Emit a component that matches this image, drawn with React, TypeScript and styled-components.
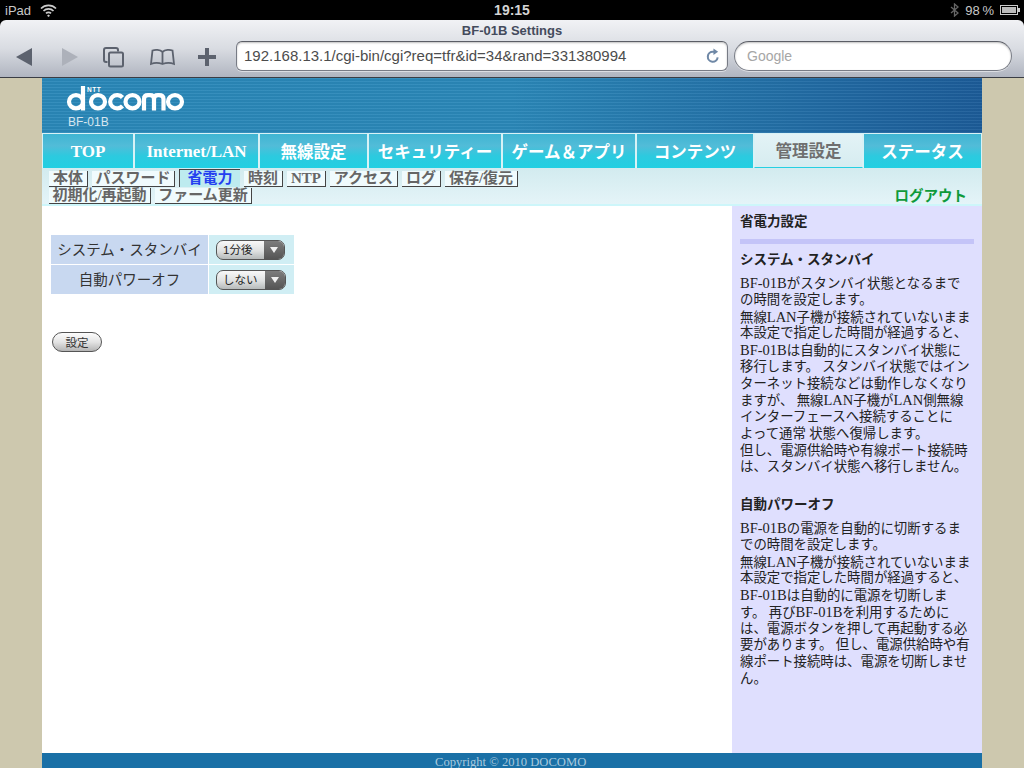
import React from "react";
import styled, { createGlobalStyle } from "styled-components";

const SANS = `"Liberation Sans", "Noto Sans CJK JP", sans-serif`;
const SERIF = `"Liberation Serif", "Noto Sans CJK JP", serif`;

const Global = createGlobalStyle`
  html, body { margin: 0; padding: 0; background: #000; }
  body { width: 1024px; height: 768px; overflow: hidden; font-family: ${SANS}; }
  * { box-sizing: border-box; }
`;

const Screen = styled.div`
  width: 1024px;
  height: 768px;
  display: flex;
  flex-direction: column;
  overflow: hidden;
  background: #000;
`;

const StatusBar = styled.div`
  height: 20px;
  display: grid;
  grid-template-columns: 1fr auto 1fr;
  align-items: center;
  padding: 0 5px;
  background: #000;
  color: #c8c8c8;
  font-size: 13px;
`;
const StatusLeft = styled.div`
  display: flex;
  align-items: center;
  gap: 9px;
`;
const StatusTime = styled.div`
  font-size: 14px;
  font-weight: 700;
  color: #d4d4d4;
`;
const StatusRight = styled.div`
  display: flex;
  align-items: center;
  justify-content: flex-end;
  gap: 6px;
`;
const Battery = styled.div`
  width: 18px;
  height: 10px;
  border: 1px solid #ccc;
  padding: 1px;
  margin-right: 1px;
  position: relative;
  &::before {
    content: "";
    display: block;
    height: 100%;
    background: #bbb;
  }
  &::after {
    content: "";
    position: absolute;
    right: -3px;
    top: 2px;
    width: 2px;
    height: 4px;
    background: #ccc;
  }
`;

const Chrome = styled.div`
  height: 58px;
  border-radius: 6px 6px 0 0;
  background: linear-gradient(#f1f2f5 0%, #d9dce2 50%, #b0b5c0 100%);
  border-bottom: 1px solid #3a3d44;
  display: flex;
  flex-direction: column;
`;
const PageTitle = styled.div`
  height: 20px;
  padding-top: 3px;
  text-align: center;
  font-size: 13px;
  font-weight: 700;
  line-height: 15px;
  color: #444b5c;
`;
const ToolRow = styled.div`
  display: flex;
  align-items: center;
  padding-left: 16px;
  height: 31px;
`;
const ToolIcon = styled.svg<{ $w: number; $mr: number }>`
  width: ${(p) => p.$w}px;
  height: 22px;
  margin-top: 3px;
  margin-right: ${(p) => p.$mr}px;
  flex: none;
`;
const UrlBar = styled.div`
  width: 492px;
  height: 30px;
  border: 1px solid #777b85;
  border-top-color: #5b5e66;
  border-radius: 6px;
  background: #fff;
  box-shadow: inset 0 1px 2px rgba(0, 0, 0, 0.25), 0 1px 0 rgba(255, 255, 255, 0.5);
  display: flex;
  align-items: center;
  justify-content: space-between;
  padding: 0 7px;
  font-size: 15px;
  color: #4c4c4c;
`;
const SearchBar = styled.div`
  width: 278px;
  height: 30px;
  margin-left: 6px;
  border: 1px solid #777b85;
  border-top-color: #5b5e66;
  border-radius: 15px;
  background: #fff;
  box-shadow: inset 0 1px 2px rgba(0, 0, 0, 0.25), 0 1px 0 rgba(255, 255, 255, 0.5);
  display: flex;
  align-items: center;
  padding-left: 12px;
  font-size: 14px;
  color: #a6a6a6;
`;

const Backdrop = styled.div`
  flex: 1;
  min-height: 0;
  background: #cdc8ae;
  padding: 0 42px;
`;
const Page = styled.div`
  height: 100%;
  display: flex;
  flex-direction: column;
  background: #fff;
`;
const Banner = styled.div`
  height: 55px;
  flex: none;
  padding: 8px 0 0 24px;
  background:
    repeating-linear-gradient(180deg, rgba(255, 255, 255, 0.055) 0 1px, rgba(0, 0, 0, 0.04) 1px 3px),
    linear-gradient(90deg, #2a88b9 0%, #2b88b9 50%, #1c5c99 100%);
`;
const LogoSvg = styled.svg`
  display: block;
  width: 122px;
  height: 30px;
`;
const Model = styled.div`
  margin: 0 0 0 2px;
  font-size: 12px;
  line-height: 12px;
  color: #d6e6f0;
`;

const TabRow = styled.div`
  height: 35px;
  flex: none;
  display: flex;
  background: #d4edf1;
`;
const Tab = styled.div<{ $w: number; $active?: boolean; $latin?: boolean }>`
  width: ${(p) => p.$w}px;
  flex: none;
  display: flex;
  align-items: center;
  justify-content: center;
  padding-top: ${(p) => (p.$latin ? 2 : 1)}px;
  border: solid #d8f2f6;
  border-width: 1px 1px 0 1px;
  font-family: ${(p) => (p.$latin ? SERIF : SANS)};
  font-weight: 700;
  font-size: ${(p) => (p.$latin ? 17 : 16.5)}px;
  line-height: 20px;
  white-space: nowrap;
  color: ${(p) => (p.$active ? "#6f6f6f" : "#fff")};
  background: ${(p) =>
    p.$active
      ? "linear-gradient(#e3f3f6, #d6ecf0)"
      : "linear-gradient(#3fb5d2 0%, #52bcd8 35%, #2ccadf 65%, #22cfe2 100%)"};
  border-bottom: ${(p) => (p.$active ? "1px solid #25d0e2" : "0")};
`;

const SubBar = styled.div`
  height: 38px;
  flex: none;
  display: flex;
  align-items: flex-start;
  justify-content: space-between;
  padding: 3px 15px 0 7px;
  background: linear-gradient(#d2ebef, #e4f4f8);
  border-bottom: 2px solid #cdf6fa;
`;
const SubLines = styled.div`
  display: flex;
  flex-direction: column;
  gap: 1px;
`;
const SubLine = styled.div`
  display: flex;
  height: 16px;
  gap: 4px;
`;
const SubItem = styled.div<{ $w: number; $active?: boolean }>`
  width: ${(p) => p.$w}px;
  height: ${(p) => (p.$active ? 18 : 16)}px;
  margin-top: ${(p) => (p.$active ? -2 : 0)}px;
  flex: none;
  display: flex;
  align-items: center;
  justify-content: center;
  padding-bottom: 2px;
  font-family: ${SERIF};
  font-weight: 700;
  font-size: 15px;
  line-height: 14px;
  white-space: nowrap;
  color: ${(p) => (p.$active ? "#2440f0" : "#666")};
  background: ${(p) => (p.$active ? "#bdebef" : "#f0fbfd")};
  border-style: solid;
  border-color: #444;
  border-width: ${(p) => (p.$active ? "1px 0 0 1px" : "0 1px 1px 0")};
`;
const Logout = styled.div`
  margin-top: 16px;
  font-size: 14.5px;
  line-height: 18px;
  font-weight: 700;
  color: #0e9a3a;
`;

const Body = styled.div`
  flex: 1;
  min-height: 0;
  display: flex;
`;
const Main = styled.div`
  flex: 1;
  padding: 29px 0 0 9px;
`;
const SettingsTable = styled.div`
  display: grid;
  grid-template-columns: 157px 85px;
  grid-auto-rows: 29px;
  gap: 1px;
  width: 243px;
`;
const LabelCell = styled.div`
  background: #c8d8f0;
  display: flex;
  align-items: center;
  justify-content: center;
  padding-bottom: 2px;
  font-size: 14.5px;
  color: #333;
`;
const ValueCell = styled.div`
  background: #d0eef4;
  display: flex;
  align-items: center;
  padding-left: 7px;
`;
const Select = styled.div<{ $w: number }>`
  width: ${(p) => p.$w}px;
  height: 20px;
  border: 1px solid #555;
  border-radius: 7px;
  overflow: hidden;
  display: flex;
  background: linear-gradient(#f8f8f8, #dfe1e1 55%, #b6baba);
  font-size: 11.5px;
  color: #222;
`;
const SelectText = styled.div`
  flex: 1;
  padding-left: 6px;
  line-height: 18px;
`;
const SelectArrow = styled.div`
  width: 20px;
  display: flex;
  align-items: center;
  justify-content: center;
  background: linear-gradient(#7d7d7d, #555);
  &::before {
    content: "";
    border: 4px solid transparent;
    border-top: 6px solid #f0f0f0;
    border-bottom: 0;
  }
`;
const SetButton = styled.div`
  width: 50px;
  height: 20px;
  margin: 38px 0 0 1px;
  border: 1px solid #555;
  border-radius: 10px;
  background: linear-gradient(#fcfcfc, #e4e4e4 50%, #b4b4b4);
  display: flex;
  align-items: center;
  justify-content: center;
  font-size: 11.5px;
  color: #333;
`;

const Side = styled.div`
  width: 250px;
  flex: none;
  background: #dfdffe;
  padding: 7px 8px 0;
  font-family: ${SERIF};
  color: #222;
`;
const SideTitle = styled.div`
  font-family: ${SANS};
  font-size: 13.5px;
  line-height: 18px;
  font-weight: 700;
  color: #222;
`;
const SideRule = styled.div`
  height: 5px;
  margin: 8px 0 7px;
  background: #c4c4f8;
`;
const SideHeading = styled.div`
  font-family: ${SANS};
  font-size: 13.5px;
  line-height: 18px;
  font-weight: 700;
  margin-bottom: 6px;
`;
const SideText = styled.div`
  font-size: 13.4px;
  line-height: 16.75px;
  white-space: nowrap;
  margin-bottom: 20px;
`;
const SideLine = styled.div`
  height: 16.75px;
`;
const LatinRun = styled.span`
  font-size: 14.5px;
`;

const FooterBar = styled.div`
  height: 15px;
  flex: none;
  background: #1a70a6;
  color: #a9c9dd;
  font-family: ${SERIF};
  font-size: 12.6px;
  line-height: 18px;
  padding-left: 393px;
  overflow: hidden;
`;

const tabs = [
  { t: "TOP", w: 92, latin: true },
  { t: "Internet/LAN", w: 125, latin: true },
  { t: "無線設定", w: 109 },
  { t: "セキュリティー", w: 134 },
  { t: "ゲーム＆アプリ", w: 134 },
  { t: "コンテンツ", w: 118 },
  { t: "管理設定", w: 109, active: true },
  { t: "ステータス", w: 119 },
];
const subRow1 = [
  { t: "本体", w: 39 },
  { t: "パスワード", w: 83 },
  { t: "省電力", w: 61, active: true },
  { t: "時刻", w: 39 },
  { t: "NTP", w: 39 },
  { t: "アクセス", w: 68 },
  { t: "ログ", w: 39 },
  { t: "保存/復元", w: 73 },
];
const subRow2 = [
  { t: "初期化/再起動", w: 102 },
  { t: "ファーム更新", w: 97 },
];

const para1 = [
  "BF-01Bがスタンバイ状態となるまで",
  "の時間を設定します。",
  "無線LAN子機が接続されていないまま",
  "本設定で指定した時間が経過すると、",
  "BF-01Bは自動的にスタンバイ状態に",
  "移行します。 スタンバイ状態ではイン",
  "ターネット接続などは動作しなくなり",
  "ますが、 無線LAN子機がLAN側無線",
  "インターフェースへ接続することに",
  "よって通常 状態へ復帰します。",
  "但し、電源供給時や有線ポート接続時",
  "は、スタンバイ状態へ移行しません。",
];
const para2 = [
  "BF-01Bの電源を自動的に切断するま",
  "での時間を設定します。",
  "無線LAN子機が接続されていないまま",
  "本設定で指定した時間が経過すると、",
  "BF-01Bは自動的に電源を切断しま",
  "す。 再びBF-01Bを利用するために",
  "は、電源ボタンを押して再起動する必",
  "要があります。 但し、電源供給時や有",
  "線ポート接続時は、電源を切断しませ",
  "ん。",
];

const Lines = ({ items }: { items: string[] }) => (
  <SideText>
    {items.map((l) => (
      <SideLine key={l}>
        {l.split(/([A-Za-z0-9-]+)/).map((part, i) =>
          i % 2 === 1 ? <LatinRun key={i}>{part}</LatinRun> : part
        )}
      </SideLine>
    ))}
  </SideText>
);

const Logo = () => (
  <LogoSvg viewBox="0 0 122 30" fill="none" stroke="#fff" strokeWidth="4.2">
    <ellipse cx="10" cy="15.700" rx="7" ry="6.600" />
    <path d="M17 0v24.500" />
    <ellipse cx="32" cy="15.700" rx="7" ry="6.600" />
    <path d="M56.500 11.500A7 6.600 0 1 0 56.500 20" />
    <ellipse cx="66.500" cy="15.700" rx="7" ry="6.600" />
    <path d="M78 24.500V13Q78 9.200 82 9.200H84Q88 9.200 88 13V24.500M88 13Q88 9.200 92 9.200H93Q97.500 9.200 97.500 13V24.500" />
    <ellipse cx="109" cy="15.700" rx="7" ry="6.600" />
    <text x="21" y="6" fontFamily="Liberation Sans" fontWeight="700" fontSize="6.500" letterSpacing="0.5" fill="#fff" stroke="none">NTT</text>
  </LogoSvg>
);

export default function App() {
  return (
    <Screen>
      <Global />
      <StatusBar>
        <StatusLeft>
          iPad
          <svg width="17" height="13" viewBox="0 0 17 13" fill="none" stroke="#ccc" strokeWidth="1.7">
            <path d="M1 4.500a10.500 10.500 0 0 1 15 0M3.500 7a7 7 0 0 1 10 0M6 9.400a3.400 3.400 0 0 1 5 0" />
            <path d="M8.500 10.500l-1.500 1.200 1.500 1.200 1.500-1.200z" fill="#ccc" stroke="none" />
          </svg>
        </StatusLeft>
        <StatusTime>19:15</StatusTime>
        <StatusRight>
          <svg width="9" height="14" viewBox="0 0 9 14" fill="none" stroke="#666" strokeWidth="1.3">
            <path d="M1 4l7 6-3.500 3V1L8 4l-7 6" />
          </svg>
          <span>98{"\u2009"}%</span>
          <Battery />
        </StatusRight>
      </StatusBar>
      <Chrome>
        <PageTitle>BF-01B Settings</PageTitle>
        <ToolRow>
          <ToolIcon $w={16} $mr={30} viewBox="0 0 16 22">
            <path d="M0 11L16 2v18z" fill="#5c626e" />
          </ToolIcon>
          <ToolIcon $w={16} $mr={25} viewBox="0 0 16 22">
            <path d="M16 11L0 2v18z" fill="#adb1ba" />
          </ToolIcon>
          <ToolIcon $w={21} $mr={26} viewBox="0 0 21 22" fill="none" stroke="#5c626e" strokeWidth="2">
            <path d="M4.500 16H3A2 2 0 0 1 1 14V4A2 2 0 0 1 3 2H13a2 2 0 0 1 2 2v1.500" />
            <rect x="6" y="6.500" width="14" height="14" rx="1.500" />
          </ToolIcon>
          <ToolIcon $w={25} $mr={23} viewBox="0 0 25 22" fill="none" stroke="#5c626e" strokeWidth="1.800">
            <path d="M12.500 6C10 3.500 5 3.500 2.500 4.500L1 18c3-1.200 8-1.200 11.500 0 3.500-1.200 8.500-1.200 11.500 0L22.500 4.500C20 3.500 15 3.500 12.500 6zM12.500 6v12" />
          </ToolIcon>
          <ToolIcon $w={18} $mr={20} viewBox="0 0 18 22" fill="#5c626e">
            <path d="M7 2h4v7h7v4h-7v7H7v-7H0V9h7z" />
          </ToolIcon>
          <UrlBar>
            <span>192.168.13.1/cgi-bin/cgi?req=tfr&amp;id=34&amp;rand=331380994</span>
            <svg width="14" height="16" viewBox="0 0 15 16" fill="none">
              <path d="M12.500 9.500A5.300 5.300 0 1 1 7.500 3.500H9" stroke="#6f88a6" strokeWidth="2.200" />
              <path d="M8 0l5 3.500L8 7z" fill="#6f88a6" />
            </svg>
          </UrlBar>
          <SearchBar>Google</SearchBar>
        </ToolRow>
      </Chrome>
      <Backdrop>
        <Page>
          <Banner>
            <Logo />
            <Model>BF-01B</Model>
          </Banner>
          <TabRow>
            {tabs.map((t) => (
              <Tab key={t.t} $w={t.w} $active={t.active} $latin={t.latin}>
                {t.t}
              </Tab>
            ))}
          </TabRow>
          <SubBar>
            <SubLines>
              <SubLine>
                {subRow1.map((s) => (
                  <SubItem key={s.t} $w={s.w} $active={s.active}>
                    {s.t}
                  </SubItem>
                ))}
              </SubLine>
              <SubLine>
                {subRow2.map((s) => (
                  <SubItem key={s.t} $w={s.w}>
                    {s.t}
                  </SubItem>
                ))}
              </SubLine>
            </SubLines>
            <Logout>ログアウト</Logout>
          </SubBar>
          <Body>
            <Main>
              <SettingsTable>
                <LabelCell>システム・スタンバイ</LabelCell>
                <ValueCell>
                  <Select $w={69}>
                    <SelectText>1分後</SelectText>
                    <SelectArrow />
                  </Select>
                </ValueCell>
                <LabelCell>自動パワーオフ</LabelCell>
                <ValueCell>
                  <Select $w={70}>
                    <SelectText>しない</SelectText>
                    <SelectArrow />
                  </Select>
                </ValueCell>
              </SettingsTable>
              <SetButton>設定</SetButton>
            </Main>
            <Side>
              <SideTitle>省電力設定</SideTitle>
              <SideRule />
              <SideHeading>システム・スタンバイ</SideHeading>
              <Lines items={para1} />
              <SideHeading>自動パワーオフ</SideHeading>
              <Lines items={para2} />
            </Side>
          </Body>
          <FooterBar>Copyright © 2010 DOCOMO</FooterBar>
        </Page>
      </Backdrop>
    </Screen>
  );
}
